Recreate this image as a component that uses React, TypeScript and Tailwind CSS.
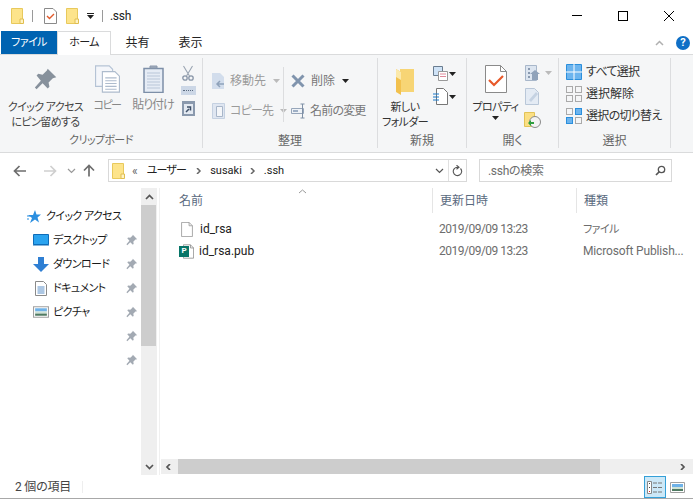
import React from "react";

const Folder = ({ s = 1 }: { s?: number }) => (
  <svg width={13 * s} height={16 * s} viewBox="0 0 13 16" className="shrink-0">
    <path d="M.5.5h11v15H.5z" fill="#fde48b" stroke="#e8c95c" />
    <path d="M9 11h3.500v4.500H9z" fill="#fff3c4" stroke="#e0be50" />
  </svg>
);
const Pin = () => (
  <svg width="12" height="12" viewBox="0 0 14 14">
    <path d="M8 1l5 5-2 .5-2.500 2.500.5 2.500-1 1-3-3-3.500 3.500-1-1L4 8 1.500 5l1-1 2.500.5L7.500 2z" fill="#a3aab3" />
  </svg>
);
const Caret = ({ c = "#222" }: { c?: string }) => (
  <svg width="7" height="4" viewBox="0 0 7 4"><path d="M0 0h7L3.500 4z" fill={c} /></svg>
);
const Doc = ({ w = 14, h = 18, c = "#a6a6a6", fill = "#fff" }: { w?: number; h?: number; c?: string; fill?: string }) => (
  <svg width={w} height={h} viewBox="0 0 14 18">
    <path d="M.5.5h9l4 4v13H.5z" fill={fill} stroke={c} />
    <path d="M9.500.5v4h4" fill="none" stroke={c} />
  </svg>
);
const Lines = ({ w = 22, h = 24, c = "#aebccd" }: { w?: number; h?: number; c?: string }) => (
  <svg width={w} height={h} viewBox="0 0 22 24">
    <path d="M.5.5h12l3 3v15H.5z" fill="#f4f6fa" stroke="#b5c3d5" />
    <path d="M6.500 5.500h11l4 4v14h-15z" fill="#fff" stroke={c} />
    <path d="M9 11h10M9 13.500h10M9 16h10M9 18.500h10M9 21h10" stroke={c} />
  </svg>
);
const ArrowL = ({ c }: { c: string }) => (
  <svg width="14" height="12" viewBox="0 0 14 12"><path d="M13 6H2M6.500 1L1.500 6l5 5" fill="none" stroke={c} strokeWidth="1.700" /></svg>
);
const ArrowR = ({ c }: { c: string }) => (
  <svg width="14" height="12" viewBox="0 0 14 12"><path d="M1 6h11M7.500 1l5 5-5 5" fill="none" stroke={c} strokeWidth="1.700" /></svg>
);
const Chev = ({ c = "#666", d = "M1 1l3.500 3.500L8 1", sw = 1.500 }: { c?: string; d?: string; sw?: number }) => (
  <svg width="9" height="6" viewBox="0 0 9 6"><path d={d} fill="none" stroke={c} strokeWidth={sw} /></svg>
);
const PicIcon = ({ w = 15, h = 11 }: { w?: number; h?: number }) => (
  <svg width={w} height={h} viewBox="0 0 15 11">
    <path d="M.5.5h14v10H.5z" fill="#fff" stroke="#a0a0a0" />
    <path d="M2 2h11v3H2z" fill="#6fb2e8" />
    <path d="M2 5h11v2H2z" fill="#cfe2d6" />
    <path d="M2 7h11v2H2z" fill="#4f7a62" />
  </svg>
);
const SelIcon = ({ fills, c }: { fills: string[]; c: string[] }) => (
  <svg width="16" height="16" viewBox="0 0 16 16" className="shrink-0">
    {[[0.5, 0.5], [9.5, 0.5], [0.5, 9.5], [9.5, 9.5]].map(([x, y], i) => (
      <rect key={i} x={x} y={y} width="6" height="6" fill={fills[i]} stroke={c[i]} />
    ))}
  </svg>
);

const NavRow = ({ icon, label }: { icon?: React.ReactNode; label?: string }) => (
  <div className="flex h-[24px] items-center">
    <div className="flex w-[50px] justify-end pr-[1px]">{icon}</div>
    <div className="ml-[3px] w-[72px] whitespace-nowrap text-[11px] tracking-[-0.6px] text-[#1a1a1a]">{label}</div>
    <div className="flex w-[14px] justify-center"><Pin /></div>
  </div>
);

const Group = ({ w, label, labelClass = "", children }: { w: string; label: string; labelClass?: string; children: React.ReactNode }) => (
  <div className={`${w} flex h-[90px] shrink-0 flex-col border-r border-[#dcdddf]`}>
    <div className="flex min-h-0 flex-1">{children}</div>
    <div className={`h-[14px] text-center leading-[14px] text-[#666] ${labelClass}`}>{label}</div>
  </div>
);

export default function App() {
  return (
    <div className="flex h-[499px] w-[693px] flex-col overflow-hidden bg-white font-['Roboto','Noto_Sans_CJK_JP',sans-serif] text-[12px] leading-none text-[#333] [font-feature-settings:'palt']">
      {/* title bar */}
      <div className="flex h-[31px] shrink-0 items-center">
        <div className="ml-[11px] flex items-center">
          <Folder />
          <div className="ml-[8px] h-[12px] w-px bg-[#9a9a9a]" />
          <div className="ml-[11px]">
            <svg width="13" height="16" viewBox="0 0 13 16">
              <path d="M.5.5h8.500l3.500 3.500v11.500H.5z" fill="#fff" stroke="#8a8a8a" />
              <path d="M3 8l2.500 2.500L10 6" fill="none" stroke="#e2592a" strokeWidth="1.400" />
            </svg>
          </div>
          <div className="ml-[9px]"><Folder /></div>
          <div className="ml-[8px] flex flex-col items-center gap-[1px]"><div className="h-px w-[7px] bg-[#222]" /><Caret /></div>
          <div className="ml-[8px] h-[12px] w-px bg-[#9a9a9a]" />
          <div className="ml-[7px] text-[12px] tracking-[-0.3px] text-[#222]">.ssh</div>
        </div>
        <div className="ml-auto mr-[1px] flex">
          <div className="flex h-[31px] w-[46px] items-center justify-center"><div className="h-px w-[10px] bg-black" /></div>
          <div className="flex h-[31px] w-[46px] items-center justify-center"><div className="h-[10px] w-[10px] border border-black" /></div>
          <div className="flex h-[31px] w-[46px] items-center justify-center">
            <svg width="10" height="10" viewBox="0 0 10 10"><path d="M0 0l10 10M10 0L0 10" stroke="#000" /></svg>
          </div>
        </div>
      </div>

      {/* tabs */}
      <div className="relative z-10 flex h-[24px] shrink-0 items-start border-b border-[#dadbdc] pl-[1px]">
        <div className="flex h-[23px] w-[56px] items-center justify-center bg-[#0063b1] text-[11px] tracking-[-0.6px] text-white">ファイル</div>
        <div className="flex h-[24px] w-[54px] items-center justify-center border-x border-t border-[#dadbdc] bg-white pb-[2px] text-[11px] tracking-[-0.6px] text-[#222]">ホーム</div>
        <div className="flex h-[23px] w-[53px] items-center justify-center text-[#222]">共有</div>
        <div className="flex h-[23px] w-[53px] items-center justify-center text-[#222]">表示</div>
        <div className="ml-auto mr-[3px] flex h-[23px] items-center gap-[12px]">
          <Chev c="#b0b0b0" d="M1 5l3.500-3.500L8 5" />
          <div className="flex h-[14px] w-[14px] items-center justify-center rounded-full bg-[#0f6fc6] text-[11px] font-bold text-white">?</div>
        </div>
      </div>

      {/* ribbon */}
      <div className="flex h-[98px] shrink-0 items-start border-b border-[#dadbdc] bg-[#f5f6f7] pt-[3px] text-[#444]">
        <Group w="w-[203px]" label="クリップボード" labelClass="text-[11px] tracking-[-0.6px]">
          <div className="flex w-[91px] flex-col items-center pt-[9px]">
            <svg width="24" height="24" viewBox="0 0 14 14">
              <path d="M8 1l5 5-2 .5-2.500 2.500.5 2.500-1 1-3-3-3.500 3.500-1-1L4 8 1.500 5l1-1 2.500.5L7.500 2z" fill="#87919c" />
            </svg>
            <div className="mt-[9px] whitespace-nowrap text-center text-[11px] leading-[15px] tracking-[-0.6px]">クイック アクセス<br />にピン留めする</div>
          </div>
          <div className="flex w-[32px] flex-col items-center pt-[7px] text-[#888]">
            <Lines w={25} h={28} />
            <div className="mt-[5px] whitespace-nowrap text-[11px] leading-[15px] tracking-[-1.5px]">コピー</div>
          </div>
          <div className="ml-[5px] flex w-[50px] flex-col items-center pt-[7px] text-[#888]">
            <svg width="21" height="28" viewBox="0 0 21 28">
              <path d="M1 3.500h19v24H1z" fill="#e6ecf5" stroke="#7d8fa8" strokeWidth="1.500" />
              <path d="M7 3h7V1H7z" fill="#a4afbf" stroke="#8896aa" />
              <path d="M4 8h13M4 11h13M4 14h13M4 17h13M4 20h13M4 23h13" stroke="#b9c6d8" />
            </svg>
            <div className="mt-[5px] whitespace-nowrap leading-[15px] tracking-[-1px]">貼り付け</div>
          </div>
          <div className="flex w-[20px] flex-col items-center gap-[5px] pt-[7px]">
            <svg width="12" height="16" viewBox="0 0 12 16">
              <circle cx="3" cy="13" r="2.200" fill="none" stroke="#8996a8" strokeWidth="1.300" />
              <circle cx="9" cy="13" r="2.200" fill="none" stroke="#8996a8" strokeWidth="1.300" />
              <path d="M1.500 1l6 10M10.500 1l-6 10" stroke="#9aa4b2" strokeWidth="1.100" />
            </svg>
            <div className="flex h-[9px] w-[15px] items-center justify-center bg-[#ccd7e6]"><div className="h-px w-[10px] border-t border-dotted border-[#5b6b80]" /></div>
            <svg width="13" height="16" viewBox="0 0 13 16">
              <path d="M0 1h13v15H0z" fill="#8a99ad" />
              <path d="M2 4h9v10H2z" fill="#e3e9f1" />
              <path d="M4 12l3-3M5 7h3.500v3.500" fill="none" stroke="#3f5068" strokeWidth="1.500" />
            </svg>
          </div>
        </Group>

        <Group w="w-[175px]" label="整理">
          <div className="flex w-[80px] shrink-0 flex-col gap-[13px] pl-[9px] pt-[14px] text-[#9b9b9b]">
            <div className="flex h-[17px] items-center gap-[5px] whitespace-nowrap">
              <svg width="13" height="16" viewBox="0 0 13 16" className="shrink-0"><path d="M0 0h8l4 4v12H0z" fill="#d2ddec" /><path d="M12 11H5M8 8l-3 3 3 3" fill="none" stroke="#8fa2ba" strokeWidth="1.500" /></svg>
              移動先<span className="ml-[2px]"><Caret c="#bbb" /></span>
            </div>
            <div className="flex h-[17px] items-center gap-[5px] whitespace-nowrap">
              <svg width="13" height="16" viewBox="0 0 13 16" className="shrink-0"><path d="M.5.5h12v15H.500z" fill="#dfe6f1" stroke="#c5d1e1" /><path d="M4.500 3.500h6v10h-6z" fill="#f4f6f9" stroke="#a8b6c9" /></svg>
              <span className="tracking-[-0.8px]">コピー先</span><span className="ml-[2px]"><Caret c="#bbb" /></span>
            </div>
          </div>
          <div className="mt-[9px] h-[55px] w-px bg-[#dcdddf]" />
          <div className="flex flex-col gap-[13px] pl-[7px] pt-[14px] text-[#777]">
            <div className="flex h-[17px] items-center gap-[5px] whitespace-nowrap">
              <svg width="14" height="14" viewBox="0 0 14 14" className="mr-[1px] shrink-0"><path d="M1.500 1.500l11 11M12.500 1.500l-11 11" stroke="#8094ad" strokeWidth="3" /></svg>
              削除<span className="ml-[2px]"><Caret /></span>
            </div>
            <div className="flex h-[17px] items-center gap-[3px] whitespace-nowrap tracking-[-0.8px]">
              <svg width="16" height="16" viewBox="0 0 16 16" className="shrink-0"><path d="M.5 5.500h12v5H.5z" fill="#eef2f7" stroke="#97a6ba" /><path d="M2 7h5v2H2z" fill="#9fb0c6" /><path d="M11.500 1v14M9.500 1h4M9.500 15h4" stroke="#7f90a6" /></svg>
              名前の変更
            </div>
          </div>
        </Group>

        <Group w="w-[89px]" label="新規">
          <div className="flex w-[54px] flex-col items-center pt-[10px]">
            <svg width="18" height="27" viewBox="0 0 18 27">
              <path d="M4 1h14v23H4z" fill="#f7d575" />
              <path d="M0 1l5 3v23l-5-3z" fill="#f2c14e" />
              <path d="M0 1l5 3v8L0 9z" fill="#fbe9ab" />
            </svg>
            <div className="mt-[5px] whitespace-nowrap text-center text-[11px] leading-[15px] tracking-[-0.6px] text-[#333]">新しい<br />フォルダー</div>
          </div>
          <div className="flex flex-col gap-[7px] pl-[1px] pt-[8px]">
            <div className="flex items-center gap-[1px]">
              <svg width="15" height="15" viewBox="0 0 15 15"><path d="M.5.5h9v9h-9z" fill="#cfe3f7" stroke="#6a7d90" /><path d="M5.500 5.500h9v9h-9z" fill="#fff" stroke="#999" /><path d="M7 8h6M7 10.500h6" stroke="#e08a9b" /></svg>
              <Caret />
            </div>
            <div className="flex items-center gap-[1px]">
              <svg width="15" height="17" viewBox="0 0 15 17"><path d="M3.500.5h7l4 4v12h-11z" fill="#fff" stroke="#777" /><path d="M0 6h6M0 9h6M0 12h6" stroke="#1878c9" /></svg>
              <Caret />
            </div>
          </div>
        </Group>

        <Group w="w-[92px]" label="開く">
          <div className="flex w-[58px] flex-col items-center pr-[1px] pt-[7px]">
            <svg width="22" height="28" viewBox="0 0 22 28">
              <path d="M.5.500h15l6 6v21H.500z" fill="#fff" stroke="#8a8a8a" />
              <path d="M15.500.500v6h6" fill="none" stroke="#8a8a8a" />
              <path d="M4 15l5 5 9-9" fill="none" stroke="#e8592a" strokeWidth="2.200" />
            </svg>
            <div className="mt-[7px] whitespace-nowrap text-[11px] leading-[15px] tracking-[-0.6px] text-[#333]">プロパティ</div>
            <div className="mt-[1px]"><Caret /></div>
          </div>
          <div className="flex flex-col gap-[7px] pt-[7px]">
            <div className="flex items-center gap-[4px]">
              <svg width="16" height="16" viewBox="0 0 16 16"><path d="M.5.500h11v15H.500z" fill="#dce5f0" stroke="#a8b7ca" /><path d="M3 3h2v2H3zM3 7h2v2H3zM3 11h2v2H3z" fill="#8a9ab0" /><path d="M7 15V9H5l5-4 5 4h-2v6z" fill="#8fa2ba" /></svg>
              <Caret c="#bbb" />
            </div>
            <svg width="15" height="17" viewBox="0 0 15 17"><path d="M.5.500h9l4 4v12H.500z" fill="#e4ebf4" stroke="#b9c7d8" /><path d="M4 12l7-8 2 2-7 8z" fill="#c5d2e2" /></svg>
            <svg width="17" height="16" viewBox="0 0 17 16" className="-ml-[1px]">
              <path d="M.5.5h10v14H.500z" fill="#fbdf84" stroke="#e2c357" />
              <circle cx="11" cy="10" r="5.500" fill="#f3f3f3" stroke="#8a8a8a" />
              <path d="M4 11l3-3v2h3v2H7v2z" fill="#2e9e3e" />
            </svg>
          </div>
        </Group>

        <Group w="w-[112px]" label="選択">
          <div className="flex flex-col gap-[7px] pl-[7px] pt-[6px] text-[#333]">
            <div className="flex h-[15px] items-center gap-[4px] whitespace-nowrap tracking-[-0.7px]">
              <svg width="16" height="16" viewBox="0 0 16 16" className="shrink-0"><path d="M.5.500h15v15H.500z" fill="#6cb4ee" stroke="#2b8fdc" /><path d="M8 0v16M0 8h16" stroke="#fff" /></svg>
              すべて選択
            </div>
            <div className="flex h-[15px] items-center gap-[4px] whitespace-nowrap">
              <SelIcon fills={["#f5f6f7", "#f5f6f7", "#f5f6f7", "#f5f6f7"]} c={["#aaa", "#aaa", "#aaa", "#aaa"]} />
              選択解除
            </div>
            <div className="flex h-[15px] items-center gap-[4px] whitespace-nowrap tracking-[-0.7px]">
              <SelIcon fills={["#f5f6f7", "#6cb4ee", "#6cb4ee", "#f5f6f7"]} c={["#aaa", "#2b8fdc", "#2b8fdc", "#aaa"]} />
              選択の切り替え
            </div>
          </div>
        </Group>
      </div>

      {/* address row */}
      <div className="flex h-[35px] shrink-0 items-center">
        <div className="ml-[13px] flex w-[95px] items-center">
          <ArrowL c="#6d6d6d" />
          <div className="ml-[16px]"><ArrowR c="#cfcfcf" /></div>
          <div className="ml-[10px]"><Chev c="#999" sw={1.200} /></div>
          <div className="ml-[7px]">
            <svg width="12" height="13" viewBox="0 0 12 13"><path d="M6 12.500V2M1 6.500l5-5 5 5" fill="none" stroke="#6d6d6d" strokeWidth="1.700" /></svg>
          </div>
        </div>
        <div className="flex h-[23px] w-[359px] items-center border border-[#d9d9d9] pl-[3px]">
          <Folder />
          <span className="ml-[7px] text-[#666]">«</span>
          <span className="ml-[9px] text-[11px] tracking-[-0.8px] text-[#222]">ユーザー</span>
          <span className="ml-[9px]"><Chev c="#666" d="M2 0l3 3-3 3" /></span>
          <span className="ml-[6px] text-[11px] text-[#222]">susaki</span>
          <span className="ml-[7px]"><Chev c="#666" d="M2 0l3 3-3 3" /></span>
          <span className="ml-[6px] text-[11px] text-[#222]">.ssh</span>
          <div className="ml-auto flex items-center">
            <Chev c="#555" sw={1.200} />
            <div className="ml-[4px] mr-[3px] h-[21px] w-px bg-[#e0e0e0]" />
            <svg width="11" height="12" viewBox="0 0 11 12" className="mr-[3px]"><path d="M8.500 3.500a4.200 4.200 0 1 1-3-1.300H7M4.500.2l2.500 2-2.500 2" fill="none" stroke="#555" strokeWidth="1.100" /></svg>
          </div>
        </div>
        <div className="ml-[12px] flex h-[23px] w-[193px] items-center justify-between border border-[#d9d9d9] pl-[8px] pr-[5px] text-[#6d6d6d]">
          <span className="tracking-[-0.3px]">.sshの検索</span>
          <svg width="11" height="11" viewBox="0 0 11 11"><circle cx="6.500" cy="4.500" r="3.200" fill="none" stroke="#555" strokeWidth="1.300" /><path d="M4 7l-3 3" stroke="#555" strokeWidth="1.700" /></svg>
        </div>
      </div>

      {/* main */}
      <div className="flex min-h-0 flex-1">
        <div className="w-[141px] shrink-0 pt-[16px]">
          <div className="flex h-[24px] items-center pl-[27px]">
            <svg width="14" height="13" viewBox="0 0 14 13"><path d="M8 0l1.500 4.500H14l-3.500 3 1.500 5L8 9.500 3 13l2-5L1 5h5z" fill="#2b8fe0" /><path d="M0 6h3M0 9h2" stroke="#2b8fe0" /></svg>
            <span className="ml-[5px] whitespace-nowrap text-[11px] tracking-[-0.6px] text-[#1a1a1a]">クイック アクセス</span>
          </div>
          <NavRow label="デスクトップ" icon={<svg width="16" height="12" viewBox="0 0 16 12"><path d="M.5.500h15v10H.500z" fill="#2aa3ef" stroke="#0f6cb8" /><path d="M0 11h16" stroke="#0f6cb8" /></svg>} />
          <NavRow label="ダウンロード" icon={<svg width="16" height="15" viewBox="0 0 16 15"><path d="M5 0h6v7h5l-8 8-8-8h5z" fill="#2f7fd3" /></svg>} />
          <NavRow label="ドキュメント" icon={<svg width="12" height="15" viewBox="0 0 12 15" className="mr-[2px]"><path d="M.5.500h8l3 3v11H.500z" fill="#fff" stroke="#8a8a8a" /><path d="M2.500 6h7M2.500 8h7M2.500 10h7M2.500 12h7" stroke="#5a8fc8" /></svg>} />
          <NavRow label="ピクチャ" icon={<PicIcon w={16} h={12} />} />
          <NavRow />
          <NavRow />
        </div>

        {/* nav scrollbar */}
        <div className="mb-[1px] flex w-[16px] shrink-0 flex-col bg-[#efefef]">
          <div className="flex h-[17px] items-center justify-center"><Chev c="#555" d="M1 5l3.500-3.500L8 5" sw={1.700} /></div>
          <div className="h-[141px] w-[15px] bg-[#cdcdcd]" />
          <div className="mt-auto flex h-[17px] items-center justify-center"><Chev c="#555" sw={1.700} /></div>
        </div>
        <div className="mb-[1px] ml-[2px] w-px shrink-0 bg-[#f0f0f0]" />
        <div className="w-[1px] shrink-0" />

        {/* file list */}
        <div className="mb-[2px] flex min-w-0 flex-1 flex-col">
          <div className="relative flex h-[25px] shrink-0 text-[#5a6a7e]">
            <div className="w-[271px] shrink-0 pl-[18px] leading-[26px]">名前</div>
            <div className="absolute left-[137px] top-[1px] text-[#888]">
              <Chev c="#999" d="M1 4l3.500-3L8 4" sw={1} />
            </div>
            <div className="w-[144px] shrink-0 border-l border-[#e5e5e5] pl-[7px] leading-[26px]">更新日時</div>
            <div className="flex-1 border-l border-[#e5e5e5] pl-[7px] leading-[26px]">種類</div>
          </div>
          <div className="flex-1 pt-[5px] text-[12px]">
            <div className="flex h-[22px] items-center">
              <div className="flex w-[271px] shrink-0 items-center pl-[20px] text-[#222]"><Doc w={12} h={15} c="#999" /><span className="ml-[7px]">id_rsa</span></div>
              <div className="w-[144px] shrink-0 whitespace-nowrap pl-[7px] tracking-[-0.5px] text-[#6d6d6d]">2019/09/09 13:23</div>
              <div className="pl-[7px] text-[11px] tracking-[-0.6px] text-[#6d6d6d]">ファイル</div>
            </div>
            <div className="flex h-[22px] items-center">
              <div className="flex w-[271px] shrink-0 items-center pl-[18px] text-[#222]">
                <div className="relative h-[15px] w-[15px]">
                  <div className="absolute right-0 top-0"><Doc w={11} h={15} c="#888" /></div>
                  <div className="absolute left-0 top-[2px] flex h-[11px] w-[10px] items-center justify-center bg-[#077568] text-[8px] font-bold text-white">P</div>
                </div>
                <span className="ml-[5px]">id_rsa.pub</span>
              </div>
              <div className="w-[144px] shrink-0 whitespace-nowrap pl-[7px] tracking-[-0.5px] text-[#6d6d6d]">2019/09/09 13:23</div>
              <div className="w-[112px] whitespace-nowrap pl-[7px] tracking-[-0.15px] text-[#6d6d6d]">Microsoft Publish...</div>
            </div>
          </div>
          <div className="flex h-[15px] shrink-0 items-center bg-[#efefef]">
            <div className="flex h-[15px] w-[17px] items-center justify-center"><Chev c="#555" d="M5 0L2 3l3 3" sw={1.700} /></div>
            <div className="h-[15px] w-[422px] bg-[#cdcdcd]" />
            <div className="ml-auto mr-[1px] flex h-[15px] w-[17px] items-center justify-center"><Chev c="#555" d="M2 0l3 3-3 3" sw={1.700} /></div>
          </div>
        </div>
      </div>

      {/* status */}
      <div className="flex h-[23px] shrink-0 items-center border-b border-[#a8a8a8] pl-[15px] text-[#444]">
        <span className="tracking-[-0.2px]">2 個の項目</span>
        <div className="ml-[11px] h-[12px] w-px bg-[#eee]" />
        <div className="ml-auto mr-[8px] flex items-center gap-[4px]">
          <div className="flex h-[22px] w-[22px] flex-col items-center justify-center border border-[#35a0d8] bg-[#cce8f7]">
            <svg width="16" height="13" viewBox="0 0 16 13"><path d="M.5.500h4v12h-4z" fill="#fff" stroke="#888" /><path d="M6 2h4M11 2h4M6 6.500h4M11 6.500h4M6 11h4M11 11h4" stroke="#777" /><path d="M2 2h1v1H2zM2 6h1v1H2z" fill="#444" /><path d="M2 10h1v1H2z" fill="#e02020" /></svg>
          </div>
          <PicIcon />
        </div>
      </div>
    </div>
  );
}
